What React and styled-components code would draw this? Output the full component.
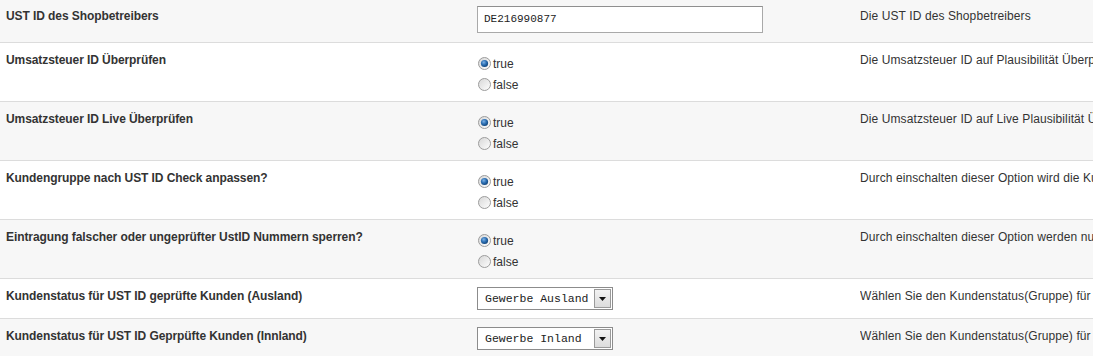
import React from "react";
import styled, { createGlobalStyle } from "styled-components";

const Global = createGlobalStyle`
  html, body { margin: 0; padding: 0; background: #fff; overflow: hidden; }
  body { font-family: "Liberation Sans", Arial, sans-serif; color: #333; }
`;

const Table = styled.div`
  margin-top: -1px;
  width: 1093px;
  overflow: hidden;
`;

const Row = styled.div`
  display: grid;
  grid-template-columns: 477px 383px 1fr;
  align-items: start;
  background: ${(p) => (p.$alt ? "#f7f7f7" : "#ffffff")};
  border-bottom: 1px solid #dcdcdc;
  white-space: nowrap;
`;

const Label = styled.div`
  padding: 10px 0 0 6px;
  font-size: 12px;
  line-height: 15px;
  font-weight: bold;
  letter-spacing: -0.08px;
  color: #333;
`;

const Desc = styled.div`
  padding-top: 10px;
  font-size: 12px;
  line-height: 15px;
  letter-spacing: 0.1px;
  color: #333;
  overflow: hidden;
`;

const Field = styled.div`
  padding: ${(p) => p.$pad};
`;

const TextInput = styled.div`
  box-sizing: border-box;
  width: 286px;
  height: 27px;
  border: 1px solid #a9a9a9;
  border-top-color: #8f8f8f;
  background: #fff;
  padding: 0 6px;
  font-family: "Liberation Mono", "Courier New", monospace;
  font-size: 11px;
  line-height: 25px;
  color: #222;
`;

const RadioLine = styled.div`
  display: flex;
  align-items: center;
  height: 21px;
  gap: 2px;
  font-size: 12px;
  color: #333;
`;

const Select = styled.div`
  box-sizing: border-box;
  width: 136px;
  height: 23px;
  border: 1px solid #8c8c8c;
  background: #fff;
  display: flex;
  align-items: stretch;
  padding: 1px;
`;

const SelectText = styled.div`
  flex: 1;
  padding-left: 6px;
  font-family: "Liberation Mono", "Courier New", monospace;
  font-size: 11.5px;
  line-height: 19px;
  color: #222;
`;

const SelectButton = styled.div`
  box-sizing: border-box;
  width: 17px;
  border: 1px solid #9a9a9a;
  background: linear-gradient(#f2f2f2, #dcdcdc);
  display: flex;
  align-items: center;
  justify-content: center;
`;

const Radio = ({ checked }) => (
  <svg width="13" height="13" viewBox="0 0 13 13">
    <defs>
      <linearGradient id="rg" x1="0" y1="0" x2="1" y2="1">
        <stop offset="0" stopColor="#d6d6d6" />
        <stop offset="1" stopColor="#ffffff" />
      </linearGradient>
      <radialGradient id="bd" cx="0.4" cy="0.35" r="0.7">
        <stop offset="0" stopColor="#7fb3e6" />
        <stop offset="0.5" stopColor="#2c6fb3" />
        <stop offset="1" stopColor="#0d3e73" />
      </radialGradient>
    </defs>
    <circle cx="6.5" cy="6.5" r="6" fill="url(#rg)" stroke="#9c9c9c" strokeWidth="1" />
    {checked && <circle cx="6.5" cy="6.5" r="3.6" fill="url(#bd)" />}
  </svg>
);

const Arrow = () => (
  <svg width="7" height="4" viewBox="0 0 7 4">
    <path d="M0 0h7L3.5 4z" fill="#111" />
  </svg>
);

const RadioGroup = ({ value }) => (
  <Field $pad="10px 0 6px 1px">
    <RadioLine>
      <Radio checked={value} />
      <span>true</span>
    </RadioLine>
    <RadioLine>
      <Radio checked={!value} />
      <span>false</span>
    </RadioLine>
  </Field>
);

const Dropdown = ({ text }) => (
  <Field $pad="8px 0 8px 0">
    <Select>
      <SelectText>{text}</SelectText>
      <SelectButton>
        <Arrow />
      </SelectButton>
    </Select>
  </Field>
);

const rows = [
  {
    label: "UST ID des Shopbetreibers",
    desc: "Die UST ID des Shopbetreibers",
    kind: "input",
    value: "DE216990877",
  },
  {
    label: "Umsatzsteuer ID Überprüfen",
    desc: "Die Umsatzsteuer ID auf Plausibilität Überprüfen",
    kind: "radio",
  },
  {
    label: "Umsatzsteuer ID Live Überprüfen",
    desc: "Die Umsatzsteuer ID auf Live Plausibilität Überprüfen",
    kind: "radio",
  },
  {
    label: "Kundengruppe nach UST ID Check anpassen?",
    desc: "Durch einschalten dieser Option wird die Kundengruppe nach dem UST ID Check angepasst",
    kind: "radio",
  },
  {
    label: "Eintragung falscher oder ungeprüfter UstID Nummern sperren?",
    desc: "Durch einschalten dieser Option werden nur geprüfte UstID Nummern eingetragen",
    kind: "radio",
  },
  {
    label: "Kundenstatus für UST ID geprüfte Kunden (Ausland)",
    desc: "Wählen Sie den Kundenstatus(Gruppe) für UST ID geprüfte Kunden (Ausland)",
    kind: "select",
    value: "Gewerbe Ausland",
  },
  {
    label: "Kundenstatus für UST ID Geprpüfte Kunden (Innland)",
    desc: "Wählen Sie den Kundenstatus(Gruppe) für UST ID geprüfte Kunden (Inland)",
    kind: "select",
    value: "Gewerbe Inland",
  },
];

export default function App() {
  return (
    <>
      <Global />
      <Table>
        {rows.map((r, i) => (
          <Row key={i} $alt={i % 2 === 0}>
            <Label>{r.label}</Label>
            {r.kind === "input" && (
              <Field $pad="7px 0 9px 0">
                <TextInput>{r.value}</TextInput>
              </Field>
            )}
            {r.kind === "radio" && <RadioGroup value={true} />}
            {r.kind === "select" && <Dropdown text={r.value} />}
            <Desc>{r.desc}</Desc>
          </Row>
        ))}
      </Table>
    </>
  );
}
